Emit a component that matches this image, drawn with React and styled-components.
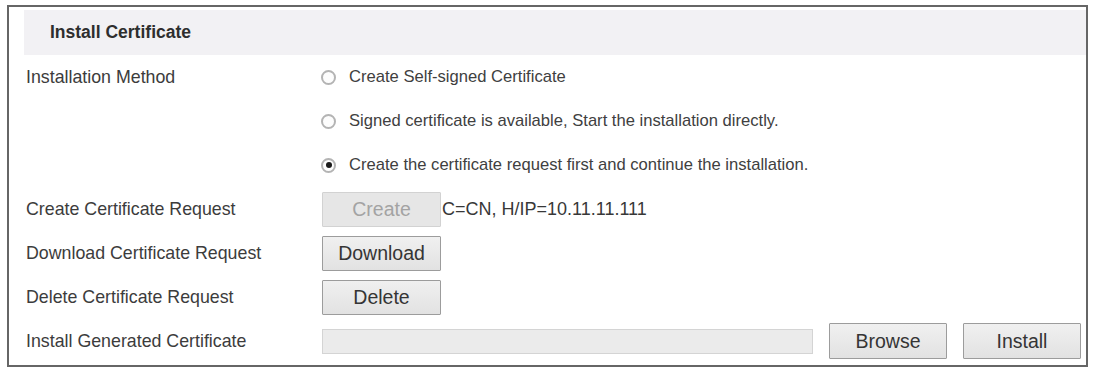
import React, { useState } from 'react';
import styled, { createGlobalStyle } from 'styled-components';

const GlobalStyle = createGlobalStyle`
  html, body {
    margin: 0;
    padding: 0;
    background: #ffffff;
  }
  * {
    box-sizing: border-box;
  }
`;

const Frame = styled.div`
  width: 1081px;
  height: 362px;
  margin: 5px 0 0 7px;
  border: 2px solid #666666;
  padding: 3px 0 0 17px;
  font-family: "Liberation Sans", Arial, sans-serif;
  font-size: 17.8px;
  color: #3c3c3c;
`;

const Header = styled.div`
  height: 45px;
  margin-left: -2px;
  background: #f2f1f4;
  display: flex;
  align-items: center;
  padding-left: 26px;
  font-weight: bold;
  font-size: 17.5px;
  color: #2e2e2e;
`;

const Row = styled.div`
  display: grid;
  grid-template-columns: 296px 1fr;
  min-height: 44px;
`;

const Label = styled.div`
  height: 44px;
  display: flex;
  align-items: center;
`;

const Field = styled.div`
  display: flex;
  flex-direction: column;
`;

const Line = styled.div`
  height: 44px;
  display: flex;
  align-items: center;
  gap: ${(p) => p.$gap || 0}px;
`;

const RadioLabel = styled.label`
  display: flex;
  align-items: center;
  gap: 13px;
  cursor: pointer;
  font-size: 16.6px;
  color: #404040;
`;

const RadioDot = styled.span`
  width: 15px;
  height: 15px;
  margin-left: -1px;
  border-radius: 50%;
  border: 2px solid #b4b4b4;
  background: #fdfdfd;
  display: flex;
  align-items: center;
  justify-content: center;
  &::after {
    content: '';
    width: 6px;
    height: 6px;
    border-radius: 50%;
    background: ${(p) => (p.$checked ? '#1a1a1a' : 'transparent')};
  }
`;

const Button = styled.button`
  width: ${(p) => p.$width || 119}px;
  height: ${(p) => p.$height || 35}px;
  font-family: inherit;
  font-size: 19.5px;
  color: ${(p) => (p.disabled ? '#a3a3a3' : '#353535')};
  background: ${(p) =>
    p.disabled
      ? '#e6e6e6'
      : 'linear-gradient(#f0f0f0, #e2e2e2)'};
  border: 1px solid ${(p) => (p.disabled ? '#d2d2d2' : '#9c9c9c')};
  border-radius: 1px;
  padding: 0;
  cursor: ${(p) => (p.disabled ? 'default' : 'pointer')};
`;

const Info = styled.span`
  margin-left: 1px;
  font-size: 18px;
  color: #383838;
`;

const FileBox = styled.div`
  width: 491px;
  height: 25px;
  background: #ebebeb;
  border: 1px solid #d4d4d4;
`;

const options = [
  'Create Self-signed Certificate',
  'Signed certificate is available, Start the installation directly.',
  'Create the certificate request first and continue the installation.',
];

export default function App() {
  const [method, setMethod] = useState(2);

  return (
    <>
      <GlobalStyle />
      <Frame>
        <Header>Install Certificate</Header>
        <Row>
          <Label>Installation Method</Label>
          <Field>
            {options.map((text, i) => (
              <Line key={text}>
                <RadioLabel onClick={() => setMethod(i)}>
                  <RadioDot $checked={method === i} />
                  {text}
                </RadioLabel>
              </Line>
            ))}
          </Field>
        </Row>
        <Row>
          <Label>Create Certificate Request</Label>
          <Line>
            <Button disabled>Create</Button>
            <Info>C=CN, H/IP=10.11.11.111</Info>
          </Line>
        </Row>
        <Row>
          <Label>Download Certificate Request</Label>
          <Line>
            <Button>Download</Button>
          </Line>
        </Row>
        <Row>
          <Label>Delete Certificate Request</Label>
          <Line>
            <Button>Delete</Button>
          </Line>
        </Row>
        <Row>
          <Label>Install Generated Certificate</Label>
          <Line $gap={16}>
            <FileBox />
            <Button $width={118} $height={36}>Browse</Button>
            <Button $width={118} $height={36}>Install</Button>
          </Line>
        </Row>
      </Frame>
    </>
  );
}
